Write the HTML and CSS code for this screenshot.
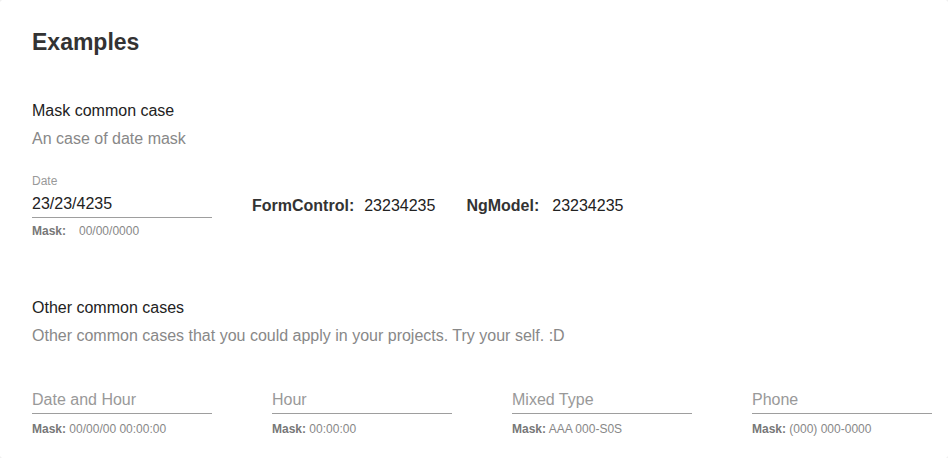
FILE: index.html
```html
<!DOCTYPE html>
<html>
<head>
<meta charset="utf-8">
<link rel="stylesheet" href="styles.css">
</head>
<body>
<div class="card">
  <h1 class="title">Examples</h1>

  <section class="section first">
    <h2 class="sub">Mask common case</h2>
    <p class="desc">An case of date mask</p>
    <div class="row">
      <div class="field">
        <div class="label">Date</div>
        <div class="input value">23/23/4235</div>
        <div class="hint"><b>Mask:</b><span class="gap">00/00/0000</span></div>
      </div>
      <div class="out"><b>FormControl:</b><span>23234235</span></div>
      <div class="out ng"><b>NgModel:</b><span>23234235</span></div>
    </div>
  </section>

  <section class="section second">
    <h2 class="sub">Other common cases</h2>
    <p class="desc">Other common cases that you could apply in your projects. Try your self. :D</p>
    <div class="grid">
      <div class="field">
        <div class="input ph">Date and Hour</div>
        <div class="hint"><b>Mask:</b> 00/00/00 00:00:00</div>
      </div>
      <div class="field">
        <div class="input ph">Hour</div>
        <div class="hint"><b>Mask:</b> 00:00:00</div>
      </div>
      <div class="field">
        <div class="input ph">Mixed Type</div>
        <div class="hint"><b>Mask:</b> AAA 000-S0S</div>
      </div>
      <div class="field">
        <div class="input ph">Phone</div>
        <div class="hint"><b>Mask:</b> (000) 000-0000</div>
      </div>
    </div>
  </section>
</div>
</body>
</html>
```

FILE: styles.css
```css
html, body {
  margin: 0;
  padding: 0;
  background: #fff;
}
body {
  font-family: "Liberation Sans", Arial, Helvetica, sans-serif;
  color: #222;
}
.card {
  box-sizing: border-box;
  width: 948px;
  height: 458px;
  padding: 26px 16px 0 32px;
  border-radius: 2px;
  box-shadow: 0 0 1px rgba(0,0,0,0.25);
}
.title {
  margin: 0;
  font-size: 23px;
  line-height: 32px;
  font-weight: bold;
  color: #333;
}
.section.first {
  margin-top: 43px;
}
.section.second {
  margin-top: 59px;
}
.sub {
  margin: 0;
  font-size: 16px;
  line-height: 20px;
  font-weight: normal;
  color: #222;
}
.desc {
  margin: 8px 0 0;
  font-size: 16px;
  line-height: 20px;
  color: #888;
}
.row {
  display: flex;
  align-items: flex-start;
  margin-top: 25px;
}
.field {
  width: 180px;
}
.label {
  font-size: 12px;
  line-height: 15px;
  color: #999;
}
.input {
  font-size: 16px;
  line-height: 20px;
  padding: 3px 0 3px;
  border-bottom: 1px solid #9e9e9e;
}
.input.value {
  padding: 5px 0 3px;
  color: #222;
}
.input.ph {
  color: #999;
}
.hint {
  margin-top: 6px;
  font-size: 12px;
  line-height: 15px;
  color: #888;
}
.grid .hint {
  margin-top: 8px;
}
.hint b {
  color: #777;
}
.hint .gap {
  margin-left: 13px;
}
.out {
  margin-top: 22px;
  margin-left: 40px;
  font-size: 16px;
  line-height: 20px;
  color: #222;
  display: flex;
  gap: 10px;
}
.out b {
  color: #333;
}
.out.ng {
  margin-left: 31px;
  gap: 13px;
}
.grid {
  display: grid;
  grid-template-columns: repeat(4, 180px);
  column-gap: 60px;
  margin-top: 41px;
}
```
